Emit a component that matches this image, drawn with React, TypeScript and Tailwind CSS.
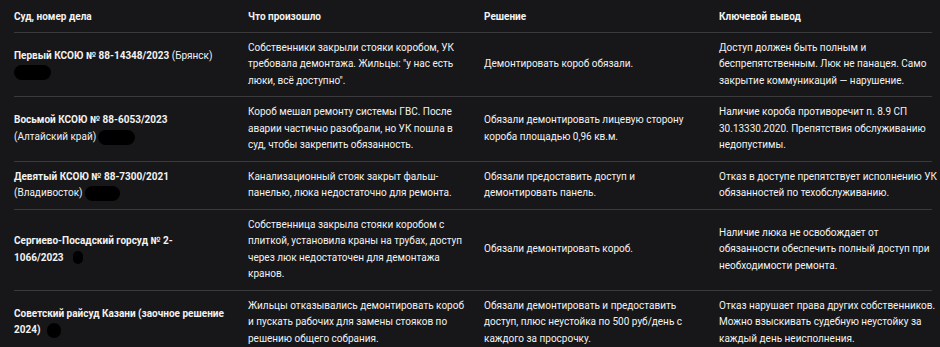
import React from "react";

const Blob = ({ w, h, ml = 0 }: { w: number; h: number; ml?: number }) => (
  <span
    className="inline-block bg-black rounded-full align-middle"
    style={{ width: w, height: h, marginLeft: ml }}
  />
);

type Row = {
  court: React.ReactNode;
  what: React.ReactNode;
  decision: React.ReactNode;
  key: React.ReactNode;
};

const rows: Row[] = [
  {
    court: (
      <>
        <span className="font-bold">Первый КСОЮ № 88-14348/2023</span> (Брянск)
        <br />
        <Blob w={37} h={15} />
      </>
    ),
    what: (
      <>
        Собственники закрыли стояки коробом, УК
        <br />
        требовала демонтажа. Жильцы: "у нас есть
        <br />
        люки, всё доступно".
      </>
    ),
    decision: <>Демонтировать короб обязали.</>,
    key: (
      <>
        Доступ должен быть полным и
        <br />
        беспрепятственным. Люк не панацея. Само
        <br />
        закрытие коммуникаций — нарушение.
      </>
    ),
  },
  {
    court: (
      <>
        <span className="font-bold">Восьмой КСОЮ № 88-6053/2023</span>
        <br />
        (Алтайский край)
        <Blob w={37} h={15} ml={2} />
      </>
    ),
    what: (
      <>
        Короб мешал ремонту системы ГВС. После
        <br />
        аварии частично разобрали, но УК пошла в
        <br />
        суд, чтобы закрепить обязанность.
      </>
    ),
    decision: (
      <>
        Обязали демонтировать лицевую сторону
        <br />
        короба площадью 0,96 кв.м.
      </>
    ),
    key: (
      <>
        Наличие короба противоречит п. 8.9 СП
        <br />
        30.13330.2020. Препятствия обслуживанию
        <br />
        недопустимы.
      </>
    ),
  },
  {
    court: (
      <>
        <span className="font-bold">Девятый КСОЮ № 88-7300/2021</span>
        <br />
        (Владивосток)
        <Blob w={35} h={15} ml={2} />
      </>
    ),
    what: (
      <>
        Канализационный стояк закрыт фальш-
        <br />
        панелью, люка недостаточно для ремонта.
      </>
    ),
    decision: (
      <>
        Обязали предоставить доступ и
        <br />
        демонтировать панель.
      </>
    ),
    key: (
      <>
        Отказ в доступе препятствует исполнению УК
        <br />
        обязанностей по техобслуживанию.
      </>
    ),
  },
  {
    court: (
      <span className="font-bold">
        Сергиево-Посадский горсуд № 2-
        <br />
        1066/2023
        <Blob w={10} h={13} ml={9} />
      </span>
    ),
    what: (
      <>
        Собственница закрыла стояки коробом с
        <br />
        плиткой, установила краны на трубах, доступ
        <br />
        через люк недостаточен для демонтажа
        <br />
        кранов.
      </>
    ),
    decision: <>Обязали демонтировать короб.</>,
    key: (
      <>
        Наличие люка не освобождает от
        <br />
        обязанности обеспечить полный доступ при
        <br />
        необходимости ремонта.
      </>
    ),
  },
  {
    court: (
      <span className="font-bold">
        Советский райсуд Казани (заочное решение
        <br />
        2024)
        <Blob w={14} h={15} ml={7} />
      </span>
    ),
    what: (
      <>
        Жильцы отказывались демонтировать короб
        <br />
        и пускать рабочих для замены стояков по
        <br />
        решению общего собрания.
      </>
    ),
    decision: (
      <>
        Обязали демонтировать и предоставить
        <br />
        доступ, плюс неустойка по 500 руб/день с
        <br />
        каждого за просрочку.
      </>
    ),
    key: (
      <>
        Отказ нарушает права других собственников.
        <br />
        Можно взыскивать судебную неустойку за
        <br />
        каждый день неисполнения.
      </>
    ),
  },
];

const cols = "grid grid-cols-[234px_236px_235px_213px]";

export default function App() {
  return (
    <div
      className="w-[940px] h-[347px] overflow-hidden bg-[#171719] text-[#f2f2f2] text-[10px] leading-[16.5px]"
      style={{ fontFamily: 'Roboto, "Liberation Sans", sans-serif' }}
    >
      <div className="pl-[14px] w-[932px]">
        <div className={`${cols} border-b border-[#3a3a3d] font-bold`}>
          <div className="pt-[9px] pb-[6px] whitespace-nowrap">Суд, номер дела</div>
          <div className="pt-[9px] pb-[6px] whitespace-nowrap">Что произошло</div>
          <div className="pt-[9px] pb-[6px] whitespace-nowrap">Решение</div>
          <div className="pt-[9px] pb-[6px] whitespace-nowrap">Ключевой вывод</div>
        </div>
        {rows.map((r, i) => (
          <div
            key={i}
            className={`${cols} items-center ${i < rows.length - 1 ? "border-b border-[#3a3a3d]" : ""}`}
          >
            <div className="py-[7px] whitespace-nowrap">{r.court}</div>
            <div className="py-[7px] whitespace-nowrap">{r.what}</div>
            <div className="py-[7px] whitespace-nowrap">{r.decision}</div>
            <div className="py-[7px] whitespace-nowrap">{r.key}</div>
          </div>
        ))}
      </div>
    </div>
  );
}
